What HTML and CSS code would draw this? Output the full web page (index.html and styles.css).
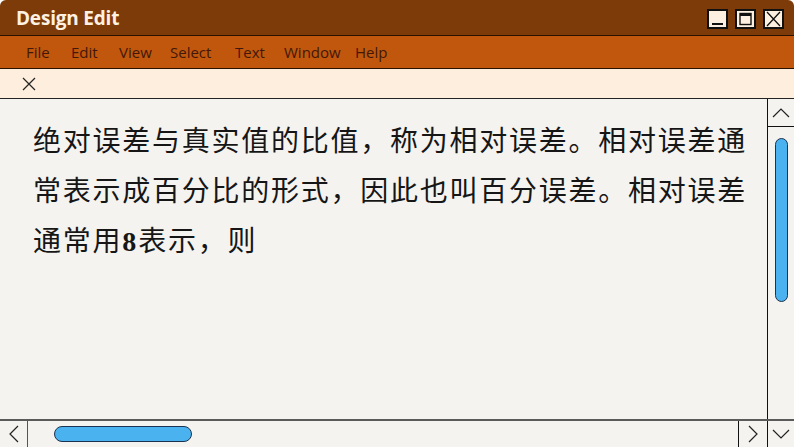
FILE: index.html
```html
<html>
<head>
    <title>Design Edit</title>
    <link rel="stylesheet" href="styles.css">
</head>

<body>
    <div class="window">
        <div class="titlebar">
            <div class="titlebar__name">Design Edit</div>
            <div class="titlebar__buttons">
                <div class="winbtn">
                    <svg width="17" height="16" viewBox="0 0 17 16"><line x1="3" y1="13" x2="14" y2="13" stroke="#111" stroke-width="2"/></svg>
                </div>
                <div class="winbtn">
                    <svg width="17" height="16" viewBox="0 0 17 16"><rect x="3" y="2.5" width="11" height="11" fill="none" stroke="#111" stroke-width="1.4"/><rect x="3" y="2" width="11" height="3" fill="#111"/></svg>
                </div>
                <div class="winbtn">
                    <svg width="17" height="16" viewBox="0 0 17 16"><path d="M2 1 L15 15 M15 1 L2 15" stroke="#111" stroke-width="1.3" fill="none"/></svg>
                </div>
            </div>
        </div>
        <div class="menubar">
            <div class="menubar__item menubar__item--file">File</div>
            <div class="menubar__item menubar__item--edit">Edit</div>
            <div class="menubar__item menubar__item--view">View</div>
            <div class="menubar__item menubar__item--select">Select</div>
            <div class="menubar__item menubar__item--text">Text</div>
            <div class="menubar__item menubar__item--window">Window</div>
            <div class="menubar__item">Help</div>
        </div>
        <div class="tabbar">
            <svg width="14" height="14" viewBox="0 0 14 14"><path d="M1 1 L13 13 M13 1 L1 13" stroke="#222" stroke-width="1.2" fill="none"/></svg>
        </div>
        <div class="main">
            <div class="editor">
                <div class="editor__text">绝对误差与真实值的比值，称为相对误差。相对误差通常表示成百分比的形式，因此也叫百分误差。相对误差通常用<b class="num">8</b>表示，则</div>
            </div>
            <div class="vscroll">
                <div class="vscroll__arrow vscroll__arrow--up">
                    <svg width="18" height="10" viewBox="0 0 18 10"><path d="M1 9 L9 1 L17 9" stroke="#222" stroke-width="1.2" fill="none"/></svg>
                </div>
                <div class="vscroll__track">
                    <div class="vscroll__thumb"></div>
                </div>
            </div>
        </div>
        <div class="hscroll">
            <div class="hscroll__arrow hscroll__arrow--left">
                <svg width="10" height="18" viewBox="0 0 10 18"><path d="M9 1 L1 9 L9 17" stroke="#222" stroke-width="1.2" fill="none"/></svg>
            </div>
            <div class="hscroll__track">
                <div class="hscroll__thumb"></div>
            </div>
            <div class="hscroll__arrow hscroll__arrow--right">
                <svg width="10" height="18" viewBox="0 0 10 18"><path d="M1 1 L9 9 L1 17" stroke="#222" stroke-width="1.2" fill="none"/></svg>
            </div>
            <div class="hscroll__arrow hscroll__arrow--down">
                <svg width="18" height="10" viewBox="0 0 18 10"><path d="M1 1 L9 9 L17 1" stroke="#222" stroke-width="1.2" fill="none"/></svg>
            </div>
        </div>
    </div>
</body>
</html>
```

FILE: styles.css
```css
body {
    margin: 0;
    background-color: #ffffff;
}

.window {
    width: 794px;
    height: 447px;
    display: flex;
    flex-direction: column;
    overflow: hidden;
    border-radius: 6px 6px 0 0;
    background-color: #f5f3f0;
}

.titlebar {
    height: 35px;
    flex: none;
    display: flex;
    align-items: center;
    justify-content: space-between;
    background-color: #7c3b08;
    border-bottom: 1px solid #2a1200;
}

.titlebar__name {
    padding-left: 16px;
    color: #fdf1e2;
    font-family: 'Open Sans', 'DejaVu Sans', sans-serif;
    font-weight: bold;
    font-size: 19px;
    letter-spacing: -0.2px;
}

.titlebar__buttons {
    display: flex;
    gap: 7px;
    padding-right: 10px;
    padding-top: 2px;
}

.winbtn {
    width: 17px;
    height: 16px;
    border: 2px solid #111;
    background-color: #fdf0e0;
    display: flex;
}

.menubar {
    height: 32px;
    flex: none;
    display: flex;
    align-items: center;
    padding-left: 26px;
    background-color: #c0570d;
    border-bottom: 1px solid #2a1200;
    font-family: 'Open Sans', 'DejaVu Sans', sans-serif;
    font-size: 15px;
    color: #43170a;
}

.menubar__item--file { width: 45px; }
.menubar__item--edit { width: 48px; }
.menubar__item--view { width: 51px; }
.menubar__item--select { width: 65px; }
.menubar__item--text { width: 49px; }
.menubar__item--window { width: 71px; }

.tabbar {
    height: 29px;
    flex: none;
    display: flex;
    align-items: center;
    padding-left: 22px;
    background-color: #fdeedd;
    border-bottom: 1px solid #222;
}

.main {
    flex: 1;
    display: flex;
    min-height: 0;
}

.editor {
    flex: 1;
    padding: 15px 0 0 33px;
    background-color: #f5f3f0;
}

.editor__text {
    width: 720px;
    font-family: 'Noto Sans CJK SC', 'Liberation Serif', serif;
    font-size: 28px;
    letter-spacing: 1.75px;
    line-height: 50px;
    color: #161616;
}

.num {
    font-family: 'Liberation Serif', serif;
    font-weight: bold;
    letter-spacing: 2px;
}

.vscroll {
    width: 26px;
    flex: none;
    display: flex;
    flex-direction: column;
    border-left: 1px solid #111;
    background-color: #f5f3f0;
}

.vscroll__arrow {
    height: 27px;
    flex: none;
    display: flex;
    align-items: center;
    justify-content: center;
    border-bottom: 1px solid #111;
}

.vscroll__track {
    flex: 1;
    padding: 11px 0 0 7px;
}

.vscroll__thumb {
    width: 11px;
    height: 162px;
    border: 1px solid #1b3350;
    border-radius: 7px;
    background-color: #4ab3ef;
}

.hscroll {
    height: 26px;
    flex: none;
    display: flex;
    border-top: 2px solid #5a5a5a;
    background-color: #f5f3f0;
}

.hscroll__arrow {
    width: 27px;
    flex: none;
    display: flex;
    align-items: center;
    justify-content: center;
}

.hscroll__arrow--left {
    border-right: 1px solid #555;
}

.hscroll__arrow--right {
    width: 28px;
    border-left: 1px solid #111;
    border-right: 1px solid #111;
}

.hscroll__arrow--down {
    width: 26px;
}

.hscroll__track {
    flex: 1;
    padding: 5px 0 0 26px;
}

.hscroll__thumb {
    width: 136px;
    height: 14px;
    border: 1px solid #1b3350;
    border-radius: 8px;
    background-color: #4ab3ef;
}
```
